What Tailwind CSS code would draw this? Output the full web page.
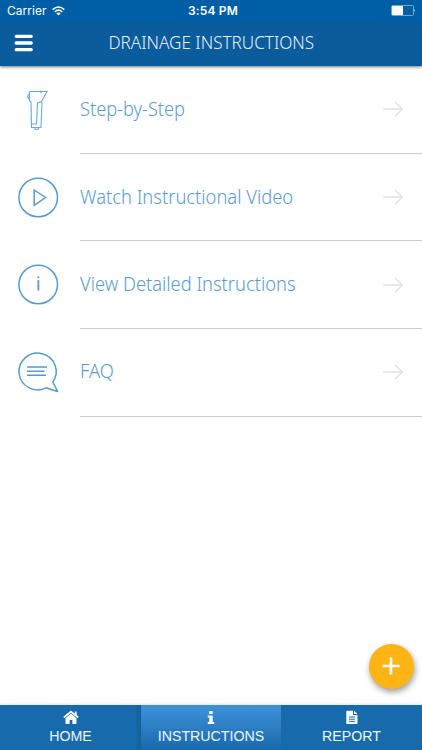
<!DOCTYPE html>
<html lang="en"><head><meta charset="utf-8"><title>Drainage Instructions</title>
<script src="https://cdn.jsdelivr.net/npm/@tailwindcss/browser@4"></script></head>
<body class="w-[422px] h-[750px] overflow-hidden bg-white font-['Liberation_Sans',sans-serif]">
<div class="relative flex h-[750px] w-[422px] flex-col">
<header class="relative h-[65.5px] shrink-0 bg-[#0b5c9c] shadow-[0_1px_3px_rgba(0,0,0,0.55)]">
  <div class="grid h-[22px] grid-cols-3 items-center bg-[#005ea6] pl-[7px] pr-[6px] font-[Inter,sans-serif] text-white">
    <div class="flex items-center gap-[5px] text-[12px] leading-[22px] tracking-[0.05px]"><span>Carrier</span>
      <svg class="h-[10px] w-[13px]" viewBox="0 0 13 10" fill="none" stroke="#fff" stroke-width="1.6"><path d="M.7 3.6Q6.5-1.6 12.3 3.6M2.8 5.8Q6.5 2.6 10.2 5.8"/><path d="M4.3 7.3Q6.5 5.5 8.7 7.3L6.5 9.6Z" fill="#fff" stroke="none"/></svg></div>
    <div class="pl-[3px] text-center text-[12px] font-semibold leading-[22px] tracking-[0.15px]">3:54 PM</div>
    <svg class="mb-px h-[11px] w-[25px] justify-self-end" viewBox="0 0 25 11"><rect x=".5" y=".5" width="22" height="10" rx="1.2" fill="none" stroke="#6ea7d3"/><path d="M1 1h11v9H1z" fill="#fff"/><path d="M23.5 4q1.3 1.5 0 3z" fill="#fff"/></svg>
  </div>
  <div class="grid h-[42px] grid-cols-[80px_1fr_80px] items-center">
    <svg class="ml-[14px] h-[18px] w-[20px]" viewBox="0 0 20 18" stroke="#fff" stroke-width="3.3" stroke-linecap="round"><path d="M2.2 2.3h15M2.2 9h15M2.2 15.7h15"/></svg>
    <h1 class="flex justify-center whitespace-nowrap font-['Noto_Sans',sans-serif] text-[18.5px] font-light leading-[40px] text-[#e6f1fa]"><span class="mb-[2px] inline-block scale-x-[0.924]">DRAINAGE INSTRUCTIONS</span></h1>
  </div>
</header>
<main class="flex-1 pt-[0.5px] font-['Noto_Sans',sans-serif] text-[19.7px] font-light text-[#599bd1]">
  <div class="flex h-[87.7px] pl-[16px]"><svg class="mt-[20px] h-[44px] w-[44px] shrink-0" viewBox="0 0 44 44" fill="none" stroke="#6aa9dc" stroke-width="1.1"><path d="M13.5 5.5H31L25.5 15.5L21.5 17L20.5 38H16M13.5 5.5V15L15 16L15.5 41.5H25L26 16M24 4.8Q26 5.5 24.5 7M12.5 8Q11 10.5 12.5 13M19 41.5V43.3H22.5V41.5"/></svg>
    <div class="ml-[20px] flex flex-1 items-center justify-between border-b border-[#c9cbcc] pr-[18px]"><span class="origin-left scale-x-[0.925] whitespace-nowrap pb-[2px]">Step-by-Step</span><svg class="h-[16px] w-[22px]" viewBox="0 0 22 16" fill="none" stroke="#e1e2e3" stroke-width="1.4"><path d="M1 8H20M13 1L20.5 8L13 15"/></svg></div></div>
  <div class="flex h-[87.7px] pl-[16px]"><svg class="mt-[21px] h-[44px] w-[44px] shrink-0" viewBox="0 0 44 44" fill="none" stroke="#559bd2" stroke-width="1.5"><circle cx="22.2" cy="22.5" r="19.3"/><path d="M18.2 15L29.5 22.5L18.2 30.3Z"/></svg>
    <div class="ml-[20px] flex flex-1 items-center justify-between border-b border-[#c9cbcc] pr-[18px]"><span class="origin-left scale-x-[0.932] whitespace-nowrap pb-[1px]">Watch Instructional Video</span><svg class="h-[16px] w-[22px]" viewBox="0 0 22 16" fill="none" stroke="#e1e2e3" stroke-width="1.4"><path d="M1 8H20M13 1L20.5 8L13 15"/></svg></div></div>
  <div class="flex h-[87.7px] pl-[16px]"><svg class="mt-[21px] h-[44px] w-[44px] shrink-0" viewBox="0 0 44 44" fill="none" stroke="#559bd2" stroke-width="1.5"><circle cx="22.2" cy="22.5" r="19.3"/><path d="M22.4 18.3V28.5M22.4 14.5V16.3" stroke-width="1.8"/></svg>
    <div class="ml-[20px] flex flex-1 items-center justify-between border-b border-[#c9cbcc] pr-[18px]"><span class="origin-left scale-x-[0.93] whitespace-nowrap pb-[2px]">View Detailed Instructions</span><svg class="h-[16px] w-[22px]" viewBox="0 0 22 16" fill="none" stroke="#e1e2e3" stroke-width="1.4"><path d="M1 8H20M13 1L20.5 8L13 15"/></svg></div></div>
  <div class="flex h-[87.7px] pl-[16px]"><svg class="mt-[20.5px] h-[44px] w-[44px] shrink-0" viewBox="0 0 44 44" fill="none" stroke="#559bd2" stroke-width="1.5" stroke-linejoin="round"><path d="M36.8 32A18.6 18.3 0 1 0 30 37.8L41.6 41.5Z"/><path d="M11 17H31M11 21.3H28.5M11 25.2H30"/></svg>
    <div class="ml-[20px] flex flex-1 items-center justify-between border-b border-[#c9cbcc] pr-[18px]"><span class="origin-left scale-x-[0.93] whitespace-nowrap pb-[3px]">FAQ</span><svg class="h-[16px] w-[22px]" viewBox="0 0 22 16" fill="none" stroke="#e1e2e3" stroke-width="1.4"><path d="M1 8H20M13 1L20.5 8L13 15"/></svg></div></div>
</main>
<button aria-label="Add" class="absolute left-[368.5px] top-[643.5px] flex h-[45px] w-[45px] items-center justify-center rounded-full bg-[#fdb515] shadow-[1px_3px_6px_rgba(0,0,0,0.4)]"><svg class="mb-px h-[18px] w-[18px]" viewBox="0 0 18 18" stroke="#fff" stroke-width="2.6"><path d="M.5 9H17.5M9 .5V17.5"/></svg></button>
<nav class="grid h-[45px] shrink-0 grid-cols-[141px_140px_141px] bg-[#176bac] text-[14.2px] leading-[18px] text-[#edf6fd] shadow-[0_-1px_3px_rgba(0,0,0,0.12)]">
  <div class="flex flex-col items-center bg-linear-to-r from-[#176bac] from-95% to-[#14609b] pt-[5px]"><svg class="h-[15px] w-[16px]" viewBox="0 0 16 15" fill="#fff"><path d="M8 3.6L2.5 8.2V13.2Q2.5 14 3.3 14H6.6V10H9.4V14H12.7Q13.5 14 13.5 13.2V8.2Z"/><path d="M.8 7.5L8 1.5L15.2 7.5M12.8 1.5V5" fill="none" stroke="#fff" stroke-width="1.7"/></svg><span class="mt-[2px]">HOME</span></div>
  <div class="flex flex-col items-center bg-linear-to-b from-[#3d92d8] to-[#1a69ae] pt-[5px]"><svg class="h-[15px] w-[8px]" viewBox="0 0 8 15" fill="#fff"><path d="M2.2 1H5.6V4H2.2ZM.8 5.5H5.7V12H7.2V14H.8V12H2.3V7.5H.8Z"/></svg><span class="mt-[2px]">INSTRUCTIONS</span></div>
  <div class="flex flex-col items-center pt-[5px]"><svg class="h-[15px] w-[12px]" viewBox="0 0 12 15"><path d="M1 .8H7V5H11.5V13.2Q11.5 14 10.7 14H1Q.3 14 .3 13.2V1.5Q.3.8 1 .8ZM8 .8L11.5 4H8Z" fill="#fff"/><path d="M3 7H9M3 9.2H9M3 11.4H9" stroke="#176bac"/></svg><span class="mt-[2px]">REPORT</span></div>
</nav>
</div></body></html>
